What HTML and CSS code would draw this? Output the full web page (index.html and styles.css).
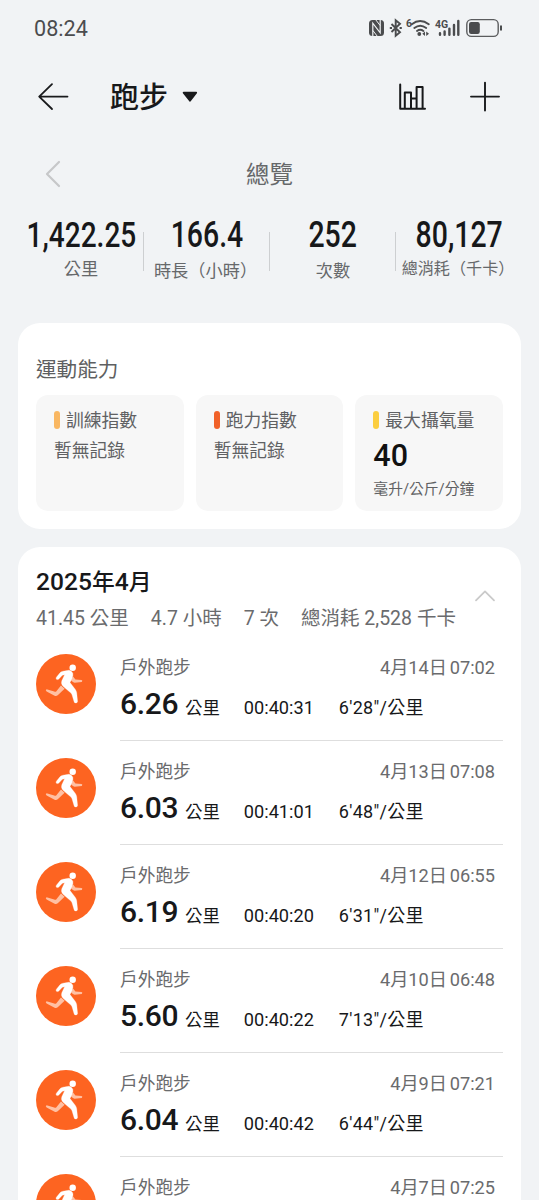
FILE: index.html
```html
<!DOCTYPE html>
<html lang="zh-Hant">
<head>
<meta charset="utf-8">
<meta name="viewport" content="width=device-width, initial-scale=1">
<title>跑步</title>
<link rel="stylesheet" href="styles.css">
</head>
<body>
<svg class="defs" width="0" height="0" aria-hidden="true">
  <symbol id="runner" viewBox="0 0 60 60">
    <circle cx="30" cy="30" r="30" fill="#fd6421"/>
    <path d="M36.9 22.2L39.4 25.4L45.6 25.9Q47 26.6 45.8 27.9L38.6 28.8Q37 28.6 35 26.2Z" fill="#ffc0a3"/>
    <path d="M25 31.6L20.2 37.5Q19.4 38 18.2 37.5L10.6 35.2Q9 36 10.6 37.4L18.6 41.8Q20.6 42.4 22 41L28.6 34.8Z" fill="#ffc0a3"/>
    <circle cx="36.7" cy="13.8" r="3.2" fill="#fff"/>
    <path d="M20.4 23.2L24.2 18.6Q25.2 17.6 27 17.2L32.4 16.3Q34.2 16.2 35.6 17.6Q37.4 19 36.9 21.4Q36.4 24.2 34 28.6L39.2 35.2Q40.4 36.8 40.7 38.8L41.6 47.4Q41.2 49.5 39 48.9Q38.3 48.6 38 47.4L36 40.8Q35.6 39.6 34.6 38.8L27.6 32.8Q24.6 30.2 25.8 26.8L28.6 20.8L26.4 21.3L22.6 25.2Q21.4 26 20.4 25.2Q19.7 24.4 20.4 23.2Z" fill="#fff" stroke="#fff" stroke-width=".3"/>
  </symbol>
</svg>

<div class="status">
  <span class="clock">08:24</span>
  <svg class="status-icons" width="136" height="24" viewBox="0 0 136 24">
    <rect x="1" y="4" width="15" height="16" rx="3.5" fill="#4b4c4e"/>
    <path d="M4.8 20.4V7.2L12.2 16.8V3.6" fill="none" stroke="#f1f3f5" stroke-width="1.2"/>
    <path d="M7.6 3.6L12.2 9.6M4.8 14.4L9.4 20.4" fill="none" stroke="#f1f3f5" stroke-width="1"/>
    <path d="M23.5 8L32 16.2L27.7 19.8V4.2L32 7.8L23.5 16" fill="none" stroke="#4b4c4e" stroke-width="1.9"/>
    <path d="M21.8 12h2.2M31.6 12h2.2" stroke="#4b4c4e" stroke-width="2"/>
    <text x="38" y="11.2" class="tiny">6</text>
    <g fill="none" stroke="#4b4c4e" stroke-width="1.9" stroke-linecap="round">
      <path d="M43.8 8.2Q52 1.8 60.8 8.2"/>
      <path d="M46.3 12Q52.2 7.4 58.2 12"/>
      <path d="M49 15Q52.2 12.6 55.4 15"/>
    </g>
    <circle cx="51.3" cy="18" r="1.9" fill="#4b4c4e"/>
    <path d="M57 15.6V20L54.3 17.8ZM58.2 15.6V20L61 17.8Z" fill="#4b4c4e"/>
    <text x="67" y="11.8" class="tiny">4G</text>
    <g stroke="#4b4c4e" stroke-width="2.4" stroke-linecap="round">
      <path d="M72 17.2V18.8M76.6 15.4V18.8M81.4 12.6V18.8M86 9V18.8M90.3 5V18.8"/>
    </g>
    <rect x="98.8" y="3.6" width="31.4" height="16.8" rx="4.6" fill="none" stroke="#5b5c5e" stroke-width="1.4"/>
    <rect x="101" y="6" width="10.8" height="12" rx="2.2" fill="#4b4c4e"/>
    <path d="M133 9.6V14.4" stroke="#4b4c4e" stroke-width="2"/>
  </svg>
</div>

<header class="toolbar">
  <svg width="32" height="32" viewBox="0 0 32 32" fill="none" stroke="#191a1c" stroke-width="1.8" stroke-linecap="round" stroke-linejoin="round"><path d="M30.5 15.6H2.2M15 3.2L2.2 15.6L15 28"/></svg>
  <h1 class="title">跑步</h1>
  <svg class="caret" width="16" height="12" viewBox="0 0 16 12"><path d="M1.6 1.6H14.2L8 9.8Z" fill="#191a1c" stroke="#191a1c" stroke-width="1.8" stroke-linejoin="round"/></svg>
  <svg class="chart" width="30" height="30" viewBox="0 0 30 30" fill="none" stroke="#17181a" stroke-width="2" stroke-linecap="round" stroke-linejoin="round"><path d="M2.2 2.4V26.7H27M6.8 26V10.6H13V26M13 16.4H18.6M18.6 26V5H24.6V26"/></svg>
  <svg class="plus" width="32" height="32" viewBox="0 0 32 32" stroke="#191a1c" stroke-width="1.9" stroke-linecap="round"><path d="M2 15.6H30M16 1.6V29.6"/></svg>
</header>

<section class="overview">
  <svg class="prev" width="18" height="30" viewBox="0 0 18 30" fill="none" stroke="#c6c7c9" stroke-width="2.2" stroke-linecap="round" stroke-linejoin="round"><path d="M15 3L3 15L15 27"/></svg>
  <h2 class="overview-title">總覽</h2>
</section>

<section class="stats">
  <div class="stat first"><b>1,422.25</b><span>公里</span></div>
  <div class="stat wide"><b>166.4</b><span>時長<i>（</i>小時<i>）</i></span></div>
  <div class="stat"><b>252</b><span>次數</span></div>
  <div class="stat last"><b>80,127</b><span>總消耗<i>（</i>千卡<i>）</i></span></div>
</section>

<section class="card ability">
  <h3>運動能力</h3>
  <div class="tiles">
    <div class="tile"><p class="tile-name amber">訓練指數</p><p class="empty">暫無記錄</p></div>
    <div class="tile"><p class="tile-name orange">跑力指數</p><p class="empty">暫無記錄</p></div>
    <div class="tile"><p class="tile-name yellow">最大攝氧量</p><p class="value">40</p><p class="unit">毫升/公斤/分鐘</p></div>
  </div>
</section>

<section class="card month">
  <div class="month-head">
    <div>
      <h3>2025<i>年</i>4<i>月</i></h3>
      <p class="totals"><span>41.45 公里</span><span>4.7 小時</span><span>7 次</span><span>總消耗 2,528 千卡</span></p>
    </div>
    <svg class="fold" width="22" height="14" viewBox="0 0 22 14" fill="none" stroke="#cacaca" stroke-width="1.8" stroke-linecap="round" stroke-linejoin="round"><path d="M2 11.4L11 2.4L20 11.4"/></svg>
  </div>
  <article class="run">
    <svg class="avatar"><use href="#runner"/></svg>
    <div class="info"><p class="top"><span>戶外跑步</span><time>4月14日 07:02</time></p><p class="data"><b>6.26</b><span class="km">公里</span><span class="time">00:40:31</span><span class="pace">6'28"/公里</span></p></div>
  </article>
  <article class="run">
    <svg class="avatar"><use href="#runner"/></svg>
    <div class="info"><p class="top"><span>戶外跑步</span><time>4月13日 07:08</time></p><p class="data"><b>6.03</b><span class="km">公里</span><span class="time">00:41:01</span><span class="pace">6'48"/公里</span></p></div>
  </article>
  <article class="run">
    <svg class="avatar"><use href="#runner"/></svg>
    <div class="info"><p class="top"><span>戶外跑步</span><time>4月12日 06:55</time></p><p class="data"><b>6.19</b><span class="km">公里</span><span class="time">00:40:20</span><span class="pace">6'31"/公里</span></p></div>
  </article>
  <article class="run">
    <svg class="avatar"><use href="#runner"/></svg>
    <div class="info"><p class="top"><span>戶外跑步</span><time>4月10日 06:48</time></p><p class="data"><b>5.60</b><span class="km">公里</span><span class="time">00:40:22</span><span class="pace">7'13"/公里</span></p></div>
  </article>
  <article class="run">
    <svg class="avatar"><use href="#runner"/></svg>
    <div class="info"><p class="top"><span>戶外跑步</span><time>4月9日 07:21</time></p><p class="data"><b>6.04</b><span class="km">公里</span><span class="time">00:40:42</span><span class="pace">6'44"/公里</span></p></div>
  </article>
  <article class="run partial">
    <svg class="avatar" viewBox="0 0 60 26"><use href="#runner" width="60" height="60"/></svg>
    <div class="info"><p class="top"><span>戶外跑步</span><time>4月7日 07:25</time></p></div>
  </article>
</section>
</body>
</html>
```
FILE: styles.css
```css
* { box-sizing: border-box; margin: 0; padding: 0; }
html, body { height: 1200px; overflow: hidden; }
body {
  display: flex;
  flex-direction: column;
  background: #f1f3f5;
  color: #17181a;
  font-family: Roboto, "Noto Sans CJK TC", sans-serif;
}
i { font-style: normal; }
.defs { position: absolute; }

.status {
  flex: none;
  height: 56px;
  padding: 0 35px 0 34px;
  display: flex;
  align-items: center;
  justify-content: space-between;
}
.clock { font-size: 21.6px; line-height: 24px; color: #4b4c4e; padding-top: 2px; }
.tiny { font: 700 10.5px Roboto, sans-serif; fill: #4b4c4e; }

.toolbar {
  flex: none;
  height: 82px;
  padding: 0 38px 0 37px;
  display: flex;
  align-items: center;
}
.title { margin-left: 41px; font-size: 29px; font-weight: 500; line-height: 40px; padding-top: 2px; }
.caret { margin-left: 14px; }
.chart { margin-left: auto; }
.plus { margin-left: 41px; }

.overview {
  flex: none;
  height: 72px;
  display: grid;
  grid-template-columns: 1fr auto 1fr;
  align-items: center;
}
.prev { margin-left: 44px; }
.overview-title { font-size: 23.5px; font-weight: 400; color: #66686a; line-height: 34px; padding-top: 2px; }

.stats {
  flex: none;
  height: 113px;
  margin: 0 17px 0 18px;
  display: grid;
  grid-template-columns: repeat(4, 126px);
  align-items: start;
}
.stat { height: 78px; padding-top: 5px; display: flex; flex-direction: column; align-items: center; position: relative; }
.stat + .stat::before {
  content: "";
  position: absolute;
  left: -1px;
  top: 22px;
  width: 1px;
  height: 39px;
  background: #cdcfd1;
}
.stat b { font-size: 36px; font-weight: 500; line-height: 40px; transform: scaleX(.79); white-space: nowrap; }
.stat span { font-size: 17.2px; line-height: 26px; color: #66686a; white-space: nowrap; margin-top: 3px; }
.stat i { font-family: "Noto Sans CJK SC", sans-serif; line-height: 1px; }
.stat.first b { font-size: 35.5px; }
.stat.first span { margin-top: 1px; }
.stat.wide span { margin-right: 3px; }
.stat.last span { font-size: 16.1px; margin: 1px 2px 0 0; }

.card { flex: none; margin: 0 18px; background: #fff; border-radius: 22px; }
.ability { height: 206px; padding: 32px 18px 18px; }
.ability h3 { font-size: 20.6px; font-weight: 400; line-height: 30px; color: #5e5f61; }
.tiles { margin-top: 10px; display: grid; grid-template-columns: repeat(3, 1fr); gap: 12px; }
.tile { height: 116px; padding: 12px 0 0 18px; background: #f7f7f7; border-radius: 12px; color: #606163; }
.tile-name { display: flex; align-items: center; gap: 6px; font-size: 17.8px; line-height: 28px; white-space: nowrap; }
.tile-name::before { content: ""; width: 6px; height: 18px; border-radius: 3px; background: currentColor; margin-top: -2px; }
.tile-name.amber::before { background: #f9b762; }
.tile-name.orange::before { background: #f1622a; }
.tile-name.yellow::before { background: #fbce40; }
.empty { font-size: 17.8px; line-height: 28px; margin-top: 2px; }
.value { font-size: 30.5px; font-weight: 480; line-height: 34px; color: #111; margin-top: 4px; }
.unit { font-size: 14.8px; line-height: 22px; margin-top: 5px; }

.month { flex: 1; min-height: 0; margin-top: 18px; border-radius: 22px 22px 0 0; overflow: hidden; }
.month-head { height: 90px; padding: 20px 25px 0 18px; display: flex; justify-content: space-between; }
.month-head h3 { font-size: 24.6px; font-weight: 500; line-height: 30px; }
.month-head i { font-size: 22.8px; }
.totals { margin-top: 7px; display: flex; gap: 22px; font-size: 19.5px; line-height: 28px; color: #6a6b6d; white-space: nowrap; }
.fold { margin-top: 22px; }

.run { height: 104px; padding: 0 18px; display: flex; }
.avatar { width: 60px; height: 60px; margin-top: 17px; flex: none; }
.info { flex: 1; margin-left: 24px; padding-top: 18px; border-bottom: 1px solid #dedede; }
.top { display: flex; justify-content: space-between; padding-right: 8px; font-size: 17.7px; line-height: 26px; color: #6a6b6d; }
.top time { font-size: 18.2px; word-spacing: -1.8px; }
.data { display: flex; align-items: baseline; font-size: 17.4px; line-height: 40px; margin-top: 3px; white-space: nowrap; }
.data b { font-size: 30px; font-weight: 500; width: 58px; letter-spacing: -.3px; }
.km { margin-left: 7px; }
.time { margin-left: 24px; width: 95px; font-size: 18.2px; }
.pace { font-size: 18px; letter-spacing: .3px; }
.partial { height: 43px; }
.partial .avatar { height: 26px; }
.partial .info { border-bottom: 0; height: 43px; padding-top: 18px; }
```
